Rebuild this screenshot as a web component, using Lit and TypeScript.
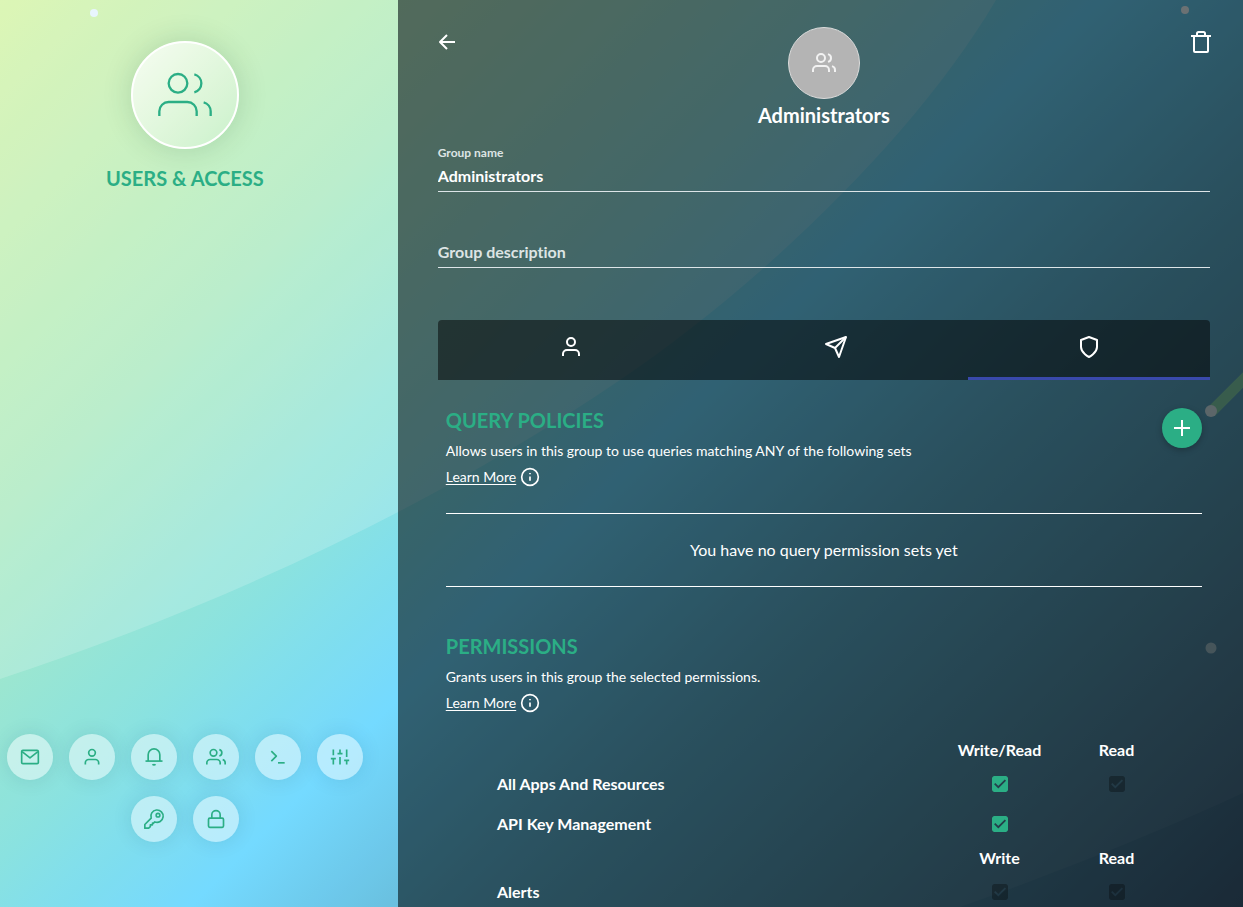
import { LitElement, html, css, svg, nothing } from "lit";
import { customElement, property, state } from "lit/decorators.js";

const icons: Record<string, unknown> = {
  users: svg`<path d="M17 21v-2a4 4 0 0 0-4-4H5a4 4 0 0 0-4 4v2"/><circle cx="9" cy="7" r="4"/><path d="M23 21v-2a4 4 0 0 0-3-3.870"/><path d="M16 3.130a4 4 0 0 1 0 7.750"/>`,
  user: svg`<path d="M20 21v-2a4 4 0 0 0-4-4H8a4 4 0 0 0-4 4v2"/><circle cx="12" cy="7" r="4"/>`,
  mail: svg`<rect x="2" y="4" width="20" height="16" rx="1.5"/><path d="M2.500 5.500L12 13l9.500-7.500"/>`,
  bell: svg`<path d="M5 16.800V9.200a7 7 0 0 1 14 0v7.600"/><path d="M1.800 16.900h20.400"/><path d="M10.200 20.600a2.200 2.200 0 0 0 3.600 0"/>`,
  terminal: svg`<path d="M4 17l6-6-6-6"/><path d="M12 19h8"/>`,
  sliders: svg`<path d="M4 21v-7M4 10V3M12 21v-9M12 8V3M20 21v-5M20 12V3M1 14h6M9 8h6M17 16h6"/>`,
  key: svg`<path d="M8.600 11A7.400 7.400 0 1 1 13 15.500L11.400 17H10.200v2H7.600v2.200L5.600 23H1v-4.400Z"/><circle cx="16.800" cy="7.400" r="2.200"/>`,
  lock: svg`<rect x="3" y="11" width="18" height="11" rx="1.500"/><path d="M7 11V7a5 5 0 0 1 10 0v4"/>`,
  back: svg`<path d="M20 12H5M12 19l-7-7 7-7"/>`,
  trash: svg`<path d="M2 6h20"/><path d="M19 6v15a1 1 0 0 1-1 1H6a1 1 0 0 1-1-1V6M8 6V3.500A1.500 1.500 0 0 1 9.500 2h5A1.500 1.500 0 0 1 16 3.500V6"/>`,
  send: svg`<path d="M22 2L11 13"/><path d="M22 2l-7 20-4-9-9-4z"/>`,
  shield: svg`<path d="M12 22s8-4 8-10V5l-8-3-8 3v7c0 6 8 10 8 10z"/>`,
  info: svg`<circle cx="12" cy="12" r="10"/><path d="M12 16.500v-5M12 8.800v-1.600"/>`,
  plus: svg`<path d="M12 4v16M4 12h16"/>`,
};

@customElement("line-icon")
export class LineIcon extends LitElement {
  @property() name = "";
  @property({ type: Number }) size = 24;
  @property({ type: Number }) weight = 2;

  static styles = css`
    :host { display: inline-flex; }
    svg { display: block; overflow: visible; }
  `;

  render() {
    return html`<svg width=${this.size} height=${this.size} viewBox="0 0 24 24" fill="none"
      stroke="currentColor" stroke-width=${this.weight} stroke-linejoin="round" aria-hidden="true">
      ${icons[this.name]}
    </svg>`;
  }
}

@customElement("page-backdrop")
export class PageBackdrop extends LitElement {
  static styles = css`
    :host { display: block; }
    svg { display: block; width: 100%; height: 100%; }
  `;

  render() {
    return html`<svg viewBox="0 0 1243 907" preserveAspectRatio="none" aria-hidden="true">
      <defs>
        <linearGradient id="sky" gradientUnits="userSpaceOnUse" x1="0" y1="0" x2="1075" y2="1075">
          <stop offset="0" stop-color="#d3f4a2"/>
          <stop offset="0.24" stop-color="#a8e9be"/>
          <stop offset="0.4" stop-color="#84e1df"/>
          <stop offset="0.51" stop-color="#6dd8ff"/>
          <stop offset="0.66" stop-color="#5cadcb"/>
          <stop offset="0.82" stop-color="#4f869f"/>
          <stop offset="1" stop-color="#3f5670"/>
        </linearGradient>
      </defs>
      <rect width="1243" height="907" fill="url(#sky)"/>
      <path fill="#fff" fill-opacity="0.05" d="M0 0H1243V793Q1120 850 960 907H0Z"/>
      <path fill="#fff" fill-opacity="0.18" d="M0 0H996C916 136 760 285 620 380C420 516 200 613 0 679Z"/>
      <path d="M1211 412L1253 370" stroke="#91db9f" stroke-width="11" stroke-opacity="0.8"/>
      <circle cx="94" cy="13" r="4" fill="#e8f5fd"/>
      <circle cx="1185" cy="10" r="4" fill="#ffffff"/>
      <circle cx="1211" cy="411" r="6" fill="#dbe4e8"/>
      <circle cx="1211" cy="648" r="5.500" fill="#a8bcc4"/>
    </svg>`;
  }
}

interface PermissionRow { name: string; write: "on" | "locked"; read?: "locked"; }
interface PermissionGroup { writeLabel: string; readLabel: string; rows: PermissionRow[]; }

@customElement("app-root")
export class AppRoot extends LitElement {
  @state() private tab = "Permissions";

  private nav = [
    ["mail", "Messages"], ["user", "Profile"], ["bell", "Notifications"], ["users", "Users"],
    ["terminal", "Console"], ["sliders", "Settings"], ["key", "API keys"], ["lock", "Security"],
  ];

  private tabs = [["user", "Members"], ["send", "Invitations"], ["shield", "Permissions"]];

  private groups: PermissionGroup[] = [
    {
      writeLabel: "Write/Read", readLabel: "Read",
      rows: [
        { name: "All Apps And Resources", write: "on", read: "locked" },
        { name: "API Key Management", write: "on" },
      ],
    },
    {
      writeLabel: "Write", readLabel: "Read",
      rows: [{ name: "Alerts", write: "locked", read: "locked" }],
    },
  ];

  static styles = css`
    :host {
      display: block;
      position: relative;
      height: 100vh;
      overflow: hidden;
      font-family: Lato, "Liberation Sans", sans-serif;
      font-size: 16px;
      font-variant-ligatures: none;
      color: #fff;
    }
    * { box-sizing: border-box; }
    h1, h2, p { margin: 0; }
    button { padding: 0; border: 0; background: none; color: inherit; font: inherit; cursor: pointer; }
    .backdrop { position: absolute; inset: 0; }
    .page { position: relative; display: grid; grid-template-columns: 32% 1fr; height: 100%; }

    .side {
      display: flex; flex-direction: column; justify-content: space-between; align-items: center;
      padding: 41px 28px 65px 0; color: #2bae85;
    }
    .brand { display: flex; flex-direction: column; align-items: center; gap: 17px; }
    .badge {
      display: grid; place-items: center; width: 108px; height: 108px; border-radius: 50%;
      border: 2px solid #fff;
      background: linear-gradient(135deg, rgba(255, 255, 255, 0.8), rgba(255, 255, 255, 0.1));
      box-shadow: 0 0 30px rgba(0, 60, 30, 0.16);
    }
    .brand h1, .section h2 { font-size: 20px; line-height: 24px; font-weight: 700; color: #2bae85; }
    .nav { display: flex; flex-wrap: wrap; justify-content: center; gap: 16px; }
    .nav button {
      display: grid; place-items: center; width: 46px; height: 46px; border-radius: 50%;
      background: rgba(255, 255, 255, 0.48); box-shadow: 0 0 20px rgba(0, 60, 80, 0.12);
    }

    .panel {
      min-width: 0; overflow-y: auto; scrollbar-width: none;
      padding: 27px 33px 0 40px; background: rgba(0, 10, 14, 0.58);
    }
    .head { display: grid; grid-template-columns: 24px 1fr 24px; align-items: start; margin: 0 -3px 17px; }
    .head button { display: flex; padding-top: 3px; }
    .group { display: flex; flex-direction: column; align-items: center; gap: 4px; }
    .avatar {
      display: grid; place-items: center; width: 72px; height: 72px; border-radius: 50%;
      background: #b4b4b4; border: 1px solid #dcdcdc; color: #f2f2f2;
    }
    .group strong { font-size: 20px; line-height: 24px; }

    .fields { display: flex; flex-direction: column; gap: 28px; margin-bottom: 52px; }
    .field label { display: block; height: 18px; font-size: 12px; line-height: 18px; font-weight: 700; color: #dde4e4; }
    .field input {
      display: block; width: 100%; height: 30px; padding: 0 0 2px; border: 0; border-bottom: 1px solid #dde5e8;
      border-radius: 0; background: none; outline: none; color: #fff; font: inherit; font-weight: 700;
    }
    .field input::placeholder { color: #dde4e4; opacity: 1; }

    .tabs {
      display: grid; grid-template-columns: 266fr 264fr 242fr; height: 60px; overflow: hidden;
      border-radius: 4px 4px 0 0; background: rgba(0, 0, 0, 0.5);
    }
    .tabs button { display: grid; place-items: center; padding-bottom: 3px; border-bottom: 3px solid transparent; }
    .tabs .active { border-bottom-color: #3949ab; }

    .content { padding: 28px 8px 0; }
    .section { display: flex; justify-content: space-between; align-items: flex-start; }
    .section h2 { margin-bottom: 6px; }
    .section p { font-size: 14px; line-height: 26px; }
    .more { display: flex; align-items: center; gap: 4px; height: 26px; }
    .more a { color: inherit; font-size: 14px; line-height: 26px; text-underline-offset: 2px; }
    .add {
      display: grid; place-items: center; flex: none; width: 40px; height: 40px;
      border-radius: 50%; box-shadow: 0 2px 6px rgba(0, 0, 0, 0.25);
    }
    .section .add { background: #2bae85; }
    .empty {
      margin: 23px 0 47px; border: solid #fff; border-width: 1px 0; text-align: center; line-height: 72px;
    }

    .perms { width: 678px; max-width: 100%; margin: 20px 27px 0 auto; border-collapse: collapse; table-layout: fixed; }
    .perms th, .perms td { height: 40px; padding: 0; font-weight: 700; line-height: 24px; text-align: center; }
    .perms .heads th, .perms .heads td { height: 28px; }
    .perms th.name { text-align: left; }
    .perms .opt { width: 117px; }
    .perms input {
      appearance: none; display: block; width: 16px; height: 16px; margin: 0 auto; border-radius: 2px;
      background: #2bae85;
      --tick: url("data:image/svg+xml,%3Csvg xmlns='http://www.w3.org/2000/svg' viewBox='0 0 16 16'%3E%3Cmask id='m'%3E%3Crect width='16' height='16' fill='white'/%3E%3Cpath d='M2.700 7.700L6.300 11.200L13.400 4.200' fill='none' stroke='black' stroke-width='1.800'/%3E%3C/mask%3E%3Crect width='16' height='16' rx='1' mask='url(%23m)'/%3E%3C/svg%3E");
      mask: var(--tick) center / 16px 16px no-repeat;
    }
    .perms input:disabled { background: rgba(0, 0, 0, 0.3); }
  `;

  private section(title: string, text: string, topic: string, add = false) {
    return html`<div class="section">
      <div>
        <h2>${title}</h2>
        <p>${text}</p>
        <div class="more"><a href="#${topic}">Learn More</a><line-icon name="info" size="20"></line-icon></div>
      </div>
      ${add ? html`<button class="add" aria-label="Add query policy"><line-icon name="plus"></line-icon></button>` : nothing}
    </div>`;
  }

  private box(kind: "on" | "locked" | undefined, label: string) {
    return kind
      ? html`<input type="checkbox" aria-label=${label} .checked=${true} ?disabled=${kind === "locked"}>`
      : nothing;
  }

  render() {
    return html`
      <page-backdrop class="backdrop"></page-backdrop>
      <div class="page">
        <aside class="side">
          <div class="brand">
            <div class="badge"><line-icon name="users" size="56" weight="1"></line-icon></div>
            <h1>USERS &amp; ACCESS</h1>
          </div>
          <nav class="nav">
            ${this.nav.map(([icon, label]) => html`
              <button aria-label=${label}><line-icon name=${icon} size="20"></line-icon></button>`)}
          </nav>
        </aside>
        <main class="panel">
          <header class="head">
            <button aria-label="Back"><line-icon name="back"></line-icon></button>
            <div class="group">
              <div class="avatar"><line-icon name="users"></line-icon></div>
              <strong>Administrators</strong>
            </div>
            <button aria-label="Delete group"><line-icon name="trash"></line-icon></button>
          </header>
          <div class="fields">
            <div class="field">
              <label for="name">Group name</label>
              <input id="name" type="text" .value=${"Administrators"}>
            </div>
            <div class="field">
              <label for="description"></label>
              <input id="description" type="text" placeholder="Group description" aria-label="Group description">
            </div>
          </div>
          <div class="tabs" role="tablist">
            ${this.tabs.map(([icon, label]) => html`
              <button role="tab" aria-label=${label} aria-selected=${this.tab === label}
                class=${this.tab === label ? "active" : ""} @click=${() => (this.tab = label)}>
                <line-icon name=${icon}></line-icon>
              </button>`)}
          </div>
          <div class="content">
            ${this.section("QUERY POLICIES", "Allows users in this group to use queries matching ANY of the following sets", "queries", true)}
            <p class="empty">You have no query permission sets yet</p>
            ${this.section("PERMISSIONS", "Grants users in this group the selected permissions.", "permissions")}
            <table class="perms">
              <colgroup><col><col class="opt"><col class="opt"></colgroup>
              ${this.groups.map((g) => html`<tbody>
                <tr class="heads"><td></td><th scope="col">${g.writeLabel}</th><th scope="col">${g.readLabel}</th></tr>
                ${g.rows.map((r) => html`<tr>
                  <th class="name" scope="row">${r.name}</th>
                  <td>${this.box(r.write, `${r.name}: ${g.writeLabel}`)}</td>
                  <td>${this.box(r.read, `${r.name}: ${g.readLabel}`)}</td>
                </tr>`)}
              </tbody>`)}
            </table>
          </div>
        </main>
      </div>
    `;
  }
}
